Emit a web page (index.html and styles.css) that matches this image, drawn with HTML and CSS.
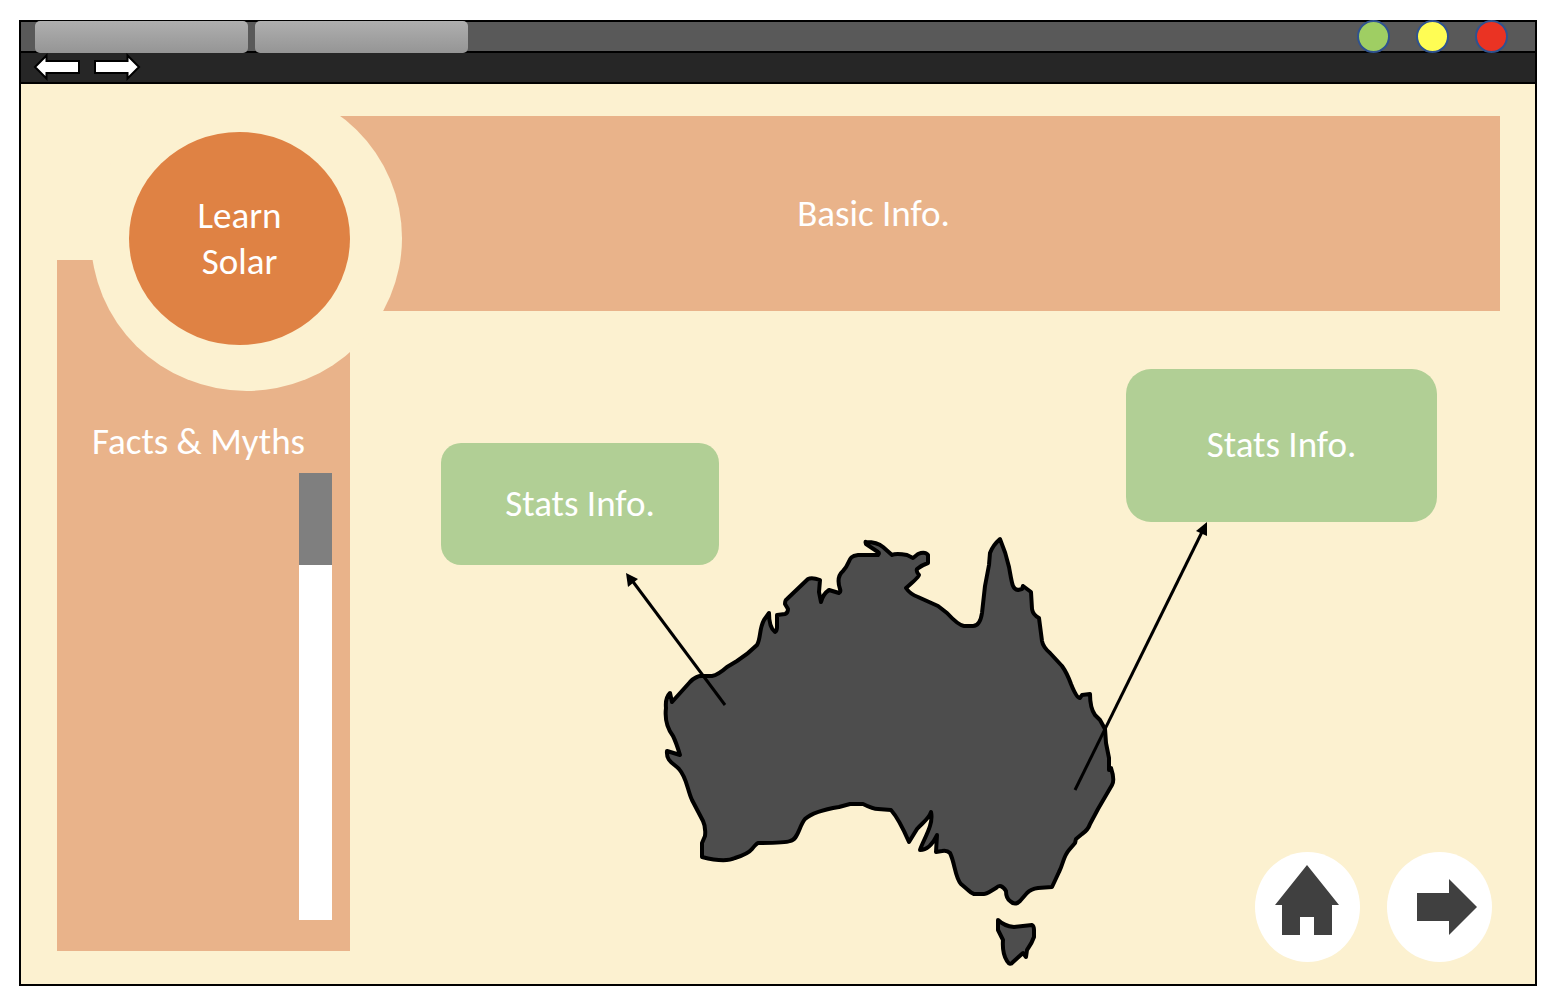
FILE: index.html
```html
<!DOCTYPE html>
<html lang="en">
<head>
<meta charset="utf-8">
<meta name="viewport" content="width=device-width, initial-scale=1">
<title>Learn Solar</title>
<link rel="stylesheet" href="styles.css">
</head>
<body>
<div class="window">
  <header class="titlebar">
    <button class="tab" type="button" aria-label="Tab 1"></button>
    <button class="tab" type="button" aria-label="Tab 2"></button>
    <div class="lights">
      <button class="light light-green" type="button" aria-label="Minimise"></button>
      <button class="light light-yellow" type="button" aria-label="Resize"></button>
      <button class="light light-red" type="button" aria-label="Close"></button>
    </div>
  </header>
  <nav class="toolbar" aria-label="History">
    <button class="history" type="button" aria-label="Back">
      <svg width="48" height="28" viewBox="0 0 48 28"><path d="M2 14 13.500 2.500V8H46V20H13.500V25.500Z"/></svg>
    </button>
    <button class="history" type="button" aria-label="Forward">
      <svg width="48" height="28" viewBox="0 0 48 28"><path d="M46 14 34.500 2.500V8H2V20H34.500V25.500Z"/></svg>
    </button>
  </nav>
  <main class="page">
    <section class="banner"><h2>Basic Info.</h2></section>
    <aside class="sidebar">
      <h2>Facts &amp; Myths</h2>
      <div class="scroll-track"><div class="scroll-thumb"></div></div>
    </aside>
    <div class="ring"><h1 class="sun">Learn<br>Solar</h1></div>
    <section class="stage">
      <svg class="map" viewBox="350 311 1150 673" role="img" aria-label="Map of Australia">
        <g class="land">
          <path d="M670 693 672 702 690 682Q697 675 703 676L712 676Q718 675 727 667L737 661Q748 654 757 645C761 638 759 629 764 620L769 613C769 624 771 629 775 632Q777 631 777 627L777 615 785 614Q788 613 788 609L785 604Q785 600 787 599L808 579Q812 577 820 580L819 592 821 602Q823 594 829 590L839 593Q841 592 840 589 836 577 843 571C851 563 847 556 858 555L878 555Q880 553 878 552L866 544Q865 541 866 542 877 542 883 547L892 555Q896 553 907 555L913 558 918 554Q925 551 928 555L928 563Q922 565 917 569 916 572 919 575 919 577 906 588 910 594 918 597L938 606 947 613Q958 625 964 626L973 626Q980 626 982 613L985 586 989 565 990 553Q993 545 1000 539 1006 553 1009 567C1012 583 1012 589 1018 590L1022 589 1023 586 1031 592 1032 609Q1033 615 1039 618L1042 641Q1043 647 1050 653L1062 666Q1067 673 1071 684 1077 699 1080 698L1082 695 1090 694Q1090 708 1095 715L1100 720 1105 729 1106 743 1109 758 1109 770 1111 768Q1115 780 1112 785L1098 809 1090 824Q1088 830 1082 834L1076 839 1075 843 1069 850C1063 857 1064 862 1059 872L1052 887 1038 888Q1031 889 1027 893L1020 901Q1015 906 1010 901 1006 898 1006 891 1001 883 996 888L991 891Q986 894 984 894L974 894Q971 893 968 890L961 884C955 878 955 863 950 853Q947 850 942 851L936 852 937 835Q930 850 920 850C923 840 934 825 931 812 929 819 922 823 917 829L909 842Q899 819 891 810L878 809Q873 809 863 804L850 804 839 807Q814 811 805 819C799 826 798 840 790 841Q785 843 758 843 756 844 752 849 748 854 735 858 725 863 702 857L702 843 705 836Q706 827 703 821L692 800C687 789 687 778 679 769 673 763 666 761 667 751L680 755Q676 742 673 736 664 724 666 708 665 698 670 693Z"/>
          <path d="M998 920Q1004 926 1014 927L1032 925Q1034 926 1034 930L1034 937Q1032 943 1027 950L1026 957 1023 953 1013 962Q1010 966 1007 961 1002 953 1003 940L998 930Z"/>
        </g>
        <g class="pointers">
          <path d="M725 705 631 579"/>
          <path d="M1075 790 1202 532"/>
          <path class="tip" d="M626 573 638 579 628 587Z"/>
          <path class="tip" d="M1207 522 1207 536 1196 531Z"/>
        </g>
      </svg>
      <button class="stat stat-west" type="button">Stats Info.</button>
      <button class="stat stat-east" type="button">Stats Info.</button>
      <nav class="page-nav" aria-label="Pages">
        <a class="round" href="#home" aria-label="Home">
          <svg viewBox="0 0 105 110"><path d="M52 13 84 53H77V83H59V65H45V83H27V53H20Z"/></svg>
        </a>
        <a class="round" href="#next" aria-label="Next">
          <svg viewBox="0 0 105 110"><path d="M30 41H62V27L90 55 62 83V69H30Z"/></svg>
        </a>
      </nav>
    </section>
  </main>
</div>
</body>
</html>
```
FILE: styles.css
```css
* { box-sizing: border-box; }

body {
  margin: 0;
  padding: 20px 19px 22px;
  min-height: 100vh;
  display: flex;
  background: #fff;
  color: #fff;
  font: 37px/46px Carlito, Calibri, Lato, sans-serif;
}

h1, h2 { margin: 0; font: inherit; }
button { margin: 0; padding: 0; border: 0; font: inherit; color: inherit; }
svg { display: block; }

.window {
  flex: 1;
  display: flex;
  flex-direction: column;
  border: 2px solid #000;
  background: #fcf1d0;
}

/* Window chrome */
.titlebar {
  display: flex;
  gap: 7px;
  height: 31px;
  padding: 0 27px 0 14px;
  border-bottom: 2px solid #000;
  background: #595959;
}
.tab {
  width: 213px;
  margin: -1px 0 -2px;
  border-radius: 5px;
  background: linear-gradient(#afafaf, #959595);
}
.lights {
  display: flex;
  gap: 26px;
  margin: -2px 0 -2px auto;
}
.light {
  width: 33px;
  height: 33px;
  border: 2px solid #2f528f;
  border-radius: 50%;
}
.light-green { background: #9fce63; }
.light-yellow { background: #fffd54; }
.light-red { background: #ea3323; }

.toolbar {
  display: flex;
  align-items: center;
  gap: 12px;
  height: 31px;
  padding: 0 12px 1px;
  border-bottom: 2px solid #000;
  background: #262626;
}
.history { background: none; }
.history path { fill: #fff; stroke: #000; stroke-width: 2; }

/* Page */
.page {
  flex: 1;
  display: grid;
  grid-template-columns: 190px 103px 1fr;
  grid-template-rows: 144px 51px 1fr;
  padding: 32px 35px 0 36px;
}
.banner {
  grid-area: 1 / 2 / 3 / 4;
  display: grid;
  place-items: center;
  background: #e9b38a;
}
.sidebar {
  grid-area: 2 / 1 / 4 / 3;
  display: flex;
  flex-direction: column;
  gap: 8px;
  margin-bottom: 33px;
  padding: 159px 18px 31px 35px;
  background: #e9b38a;
  white-space: nowrap;
}
.scroll-track {
  flex: 1;
  align-self: flex-end;
  width: 33px;
  background: #fff;
}
.scroll-thumb { height: 92px; background: #7f7f7f; }

.ring {
  grid-area: 1 / 1 / 3 / 3;
  z-index: 1;
  width: 311px;
  height: 306px;
  margin: -31px 0 0 34px;
  padding: 47px 52px 46px 38px;
  border-radius: 50%;
  background: #fcf1d0;
}
.sun {
  display: grid;
  place-content: center;
  height: 100%;
  border-radius: 50%;
  background: #df8244;
  text-align: center;
}

/* Map with its callouts; each place is a share of the 1150 x 673 drawing */
.stage {
  grid-area: 3 / 3;
  align-self: start;
  position: relative;
}
.map { width: 100%; height: auto; }
.land { fill: #4d4d4d; stroke: #000; stroke-width: 4; stroke-linejoin: round; }
.pointers { fill: none; stroke: #000; stroke-width: 3; }
.pointers .tip { fill: #000; stroke: none; }

.stat { position: absolute; background: #b1cf95; }
.stat-west {
  left: calc(100% * 91 / 1150);
  top: calc(100% * 132 / 673);
  width: calc(100% * 278 / 1150);
  height: calc(100% * 122 / 673);
  border-radius: 20px;
}
.stat-east {
  left: calc(100% * 776 / 1150);
  top: calc(100% * 58 / 673);
  width: calc(100% * 311 / 1150);
  height: calc(100% * 153 / 673);
  border-radius: 25px;
}
.page-nav {
  position: absolute;
  right: 8px;
  bottom: 22px;
  display: flex;
  gap: 27px;
}
.round {
  width: 105px;
  height: 110px;
  border-radius: 50%;
  background: #fff;
}
.round path { fill: #404040; }
```
